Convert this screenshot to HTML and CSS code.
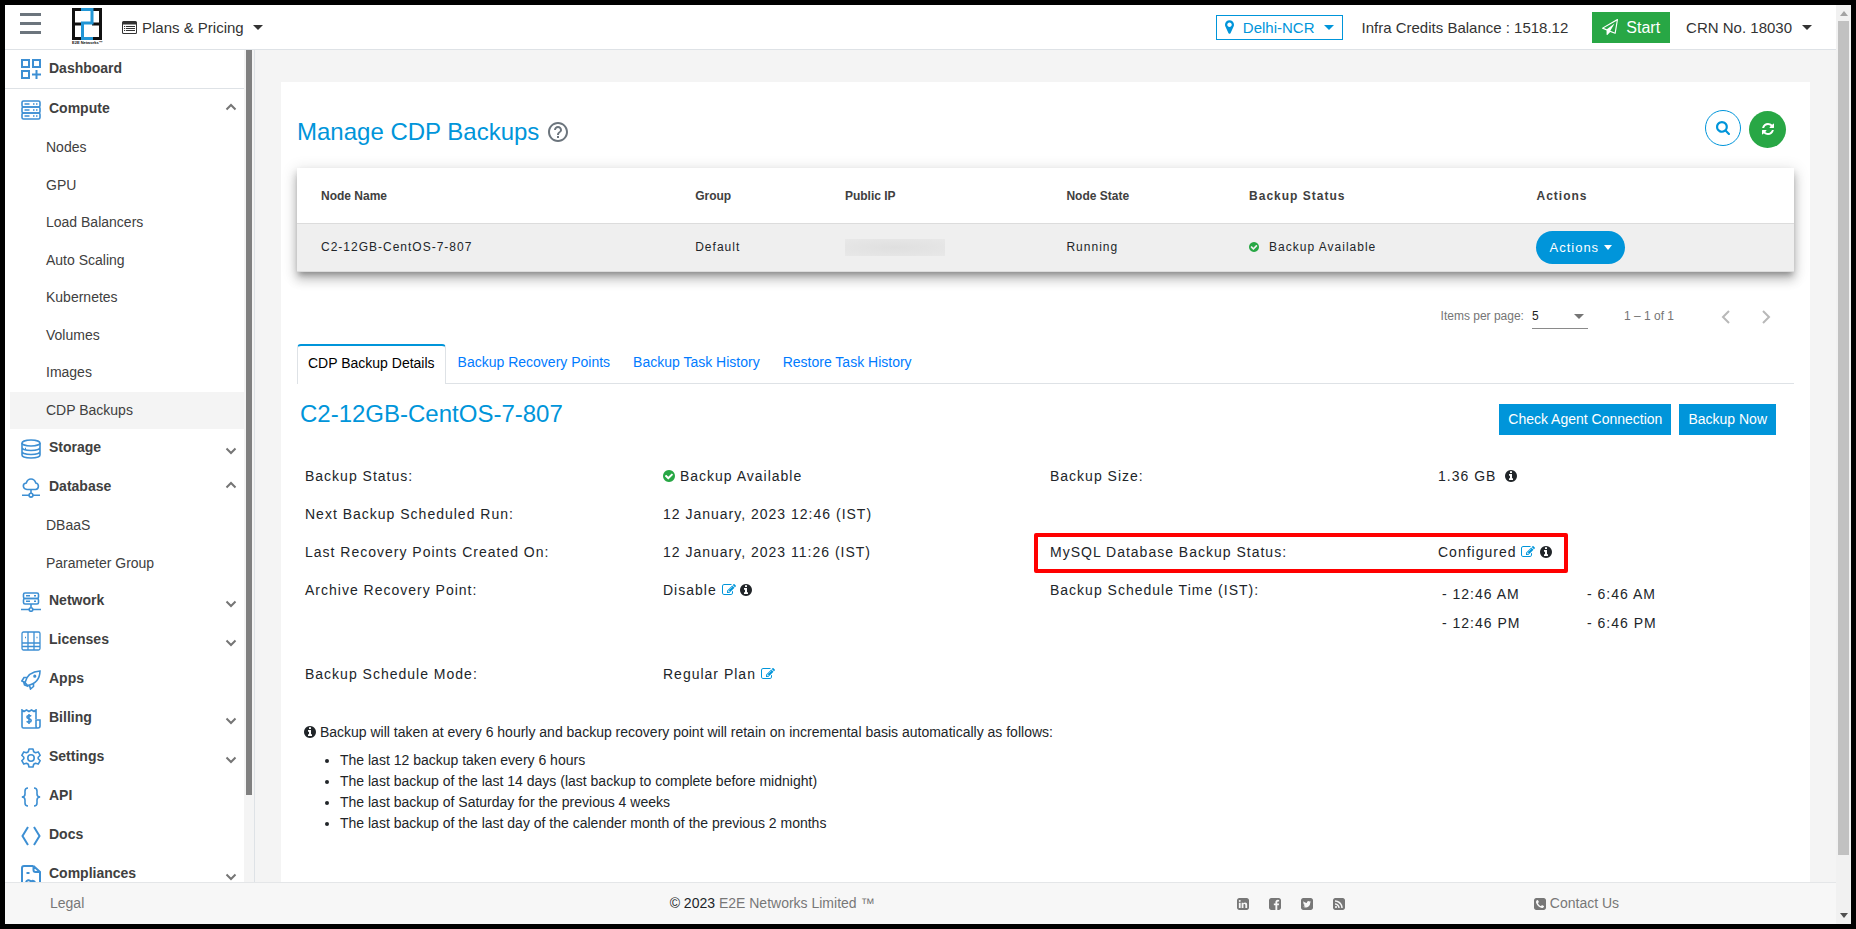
FILE: index.html
```html
<!DOCTYPE html>
<html lang="en">
<head>
<meta charset="utf-8">
<title>Manage CDP Backups</title>
<link rel="stylesheet" href="styles.css">
</head>
<body>
<svg class="sprite" aria-hidden="true">
  <symbol id="info" viewBox="128 128 1536 1536"><path d="M1152 1376v-160q0-14-9-23t-23-9h-96v-512q0-14-9-23t-23-9h-320q-14 0-23 9t-9 23v160q0 14 9 23t23 9h96v320h-96q-14 0-23 9t-9 23v160q0 14 9 23t23 9h448q14 0 23-9t9-23zm-128-896v-160q0-14-9-23t-23-9h-192q-14 0-23 9t-9 23v160q0 14 9 23t23 9h192q14 0 23-9t9-23zm640 416q0 209-103 385.5t-279.5 279.5-385.5 103-385.5-103-279.5-279.5-103-385.5 103-385.5 279.5-279.5 385.5-103 385.5 103 279.5 279.5 103 385.5z"/></symbol>
  <symbol id="check" viewBox="128 128 1536 1536"><path d="M1412 734q0-28-18-46l-91-90q-19-19-45-19t-45 19l-408 407-226-226q-19-19-45-19t-45 19l-91 90q-18 18-18 46 0 27 18 45l362 362q19 19 45 19 27 0 46-19l543-543q18-18 18-45zm252 162q0 209-103 385.5t-279.5 279.5-385.5 103-385.5-103-279.5-279.5-103-385.5 103-385.5 279.5-279.5 385.5-103 385.5 103 279.5 279.5 103 385.5z"/></symbol>
  <symbol id="edit" viewBox="0 128 1792 1536"><path d="M888 1184l116-116-152-152-116 116v56h96v96h56zm440-720q-16-16-33 1l-350 350q-17 17-1 33t33-1l350-350q17-17 1-33zm80 594v190q0 119-84.5 203.5t-203.5 84.5h-832q-119 0-203.5-84.5t-84.5-203.5v-832q0-119 84.5-203.5t203.5-84.5h832q63 0 117 25 15 7 18 23 3 17-9 29l-49 49q-14 14-32 8-23-6-45-6h-832q-66 0-113 47t-47 113v832q0 66 47 113t113 47h832q66 0 113-47t47-113v-126q0-13 9-22l64-64q15-15 35-7t20 29zm-96-738l288 288-672 672h-288v-288zm444 132l-92 92-288-288 92-92q28-28 68-28t68 28l152 152q28 28 28 68t-28 68z"/></symbol>
  <symbol id="down" viewBox="0 0 12 8"><path d="M1.5 1.5 6 6l4.500-4.500" fill="none" stroke="currentColor" stroke-width="2"/></symbol>
  <symbol id="up" viewBox="0 0 12 8"><path d="M1.500 6.500 6 2l4.500 4.500" fill="none" stroke="currentColor" stroke-width="2"/></symbol>
</svg>
<div class="frame">
  <header class="topbar">
    <button class="menu" aria-label="Toggle menu"><span></span><span></span><span></span></button>
    <a class="logo" href="#" aria-label="E2E Networks">
      <svg width="30" height="32" viewBox="0 0 30 32" fill="none" stroke-width="3"><path d="M11 1.500H1.500v29H9M20 1.500h8.500v29H20M1.500 16h8M20 16h9" stroke="#111"/><path d="M9 1.500h11v13.500H10.500v15.500H21" stroke="#2196d6"/></svg>
      <small>E2E Networks™</small>
    </a>
    <button class="drop plans">
      <svg width="15" height="13" viewBox="0 0 15 13"><path fill="currentColor" fill-rule="evenodd" d="M1.500 0h12A1.500 1.500 0 0 1 15 1.500v10a1.500 1.500 0 0 1-1.500 1.500h-12A1.500 1.500 0 0 1 0 11.500v-10A1.500 1.500 0 0 1 1.500 0zM1 3.500V11.500c0 .3.200.5.500.5h12c.3 0 .5-.2.500-.5v-8zM2 5h1.200v1H2zM4 5h9v1H4zM2 7h1.200v1H2zM4 7h9v1H4zM2 9h1.200v1H2zM4 9h9v1H4z"/></svg>
      <span>Plans &amp; Pricing</span><i class="caret"></i>
    </button>
    <div class="topbar-right">
      <button class="drop region">
        <svg width="9" height="14" viewBox="384 128 1024 1536"><path fill="currentColor" d="M1152 640q0-106-75-181t-181-75-181 75-75 181 75 181 181 75 181-75 75-181zm256 0q0 109-33 179l-364 774q-16 33-47.500 52t-67.500 19-67.500-19-46.500-52l-365-774q-33-70-33-179 0-212 150-362t362-150 362 150 150 362z"/></svg>
        <span>Delhi-NCR</span><i class="caret"></i>
      </button>
      <span class="credits">Infra Credits Balance : 1518.12</span>
      <button class="start"><svg width="16" height="16" viewBox="0 0 1792 1792"><path fill="currentColor" d="M1764 11q33 24 27 64l-256 1536q-5 29-32 45-14 8-31 8-11 0-24-5l-527-215-298 327q-18 21-47 21-14 0-23-4-19-7-30-23.500t-11-36.500v-452l-472-193q-37-14-40-55-3-39 32-59l1664-960q35-21 68 2zm-342 1499l221-1323-1434 827 336 137 863-639-478 797z"/></svg>Start</button>
      <button class="drop"><span>CRN No. 18030</span><i class="caret"></i></button>
    </div>
  </header>

  <div class="workspace">
    <nav class="sidebar" aria-label="Main">
      <div class="nav-list">
        <a class="section first" href="#"><svg viewBox="0 0 20 20"><path d="M1 1h7v7H1zM12 1h7v7h-7zM1 12h7v7H1zM15.500 11v9M11 15.500h9" stroke-width="2"/></svg><span>Dashboard</span></a>
        <a class="section" href="#"><svg viewBox="0 0 20 20"><rect x="1" y="1" width="18" height="6" rx="1.500"/><rect x="1" y="7" width="18" height="6" rx="1.500"/><rect x="1" y="13" width="18" height="6" rx="1.500"/><path d="M3.500 4h5M12 4h1.500M15 4h1.500M3.500 10h5M12 10h1.500M15 10h1.500M3.500 16h5M12 16h1.500M15 16h1.500"/></svg><span>Compute</span><svg class="chev up"><use href="#up"/></svg></a>
        <ul class="sub">
          <li><a href="#">Nodes</a></li>
          <li><a href="#">GPU</a></li>
          <li><a href="#">Load Balancers</a></li>
          <li><a href="#">Auto Scaling</a></li>
          <li><a href="#">Kubernetes</a></li>
          <li><a href="#">Volumes</a></li>
          <li><a href="#">Images</a></li>
          <li><a class="active" href="#" aria-current="page">CDP Backups</a></li>
        </ul>
        <a class="section" href="#"><svg viewBox="0 0 20 20"><ellipse cx="10" cy="4" rx="9" ry="3"/><path d="M1 4v12c0 1.700 4 3 9 3s9-1.300 9-3V4M1 8.500c0 1.700 4 3 9 3s9-1.300 9-3M1 12.500c0 1.700 4 3 9 3s9-1.300 9-3M4 9.500h1M4 14.800h1"/></svg><span>Storage</span><svg class="chev"><use href="#down"/></svg></a>
        <a class="section" href="#"><svg viewBox="0 0 20 20"><path d="M6 11.500h8.500a3.300 3.300 0 0 0 .3-6.500C14 2.500 12.200 1 10 1S6 2.500 5.300 5C1 5.500 1.500 11 6 11.500zM10 11.500V15M1 17.200h7M12 17.200h7"/><circle cx="10" cy="17.200" r="1.900"/></svg><span>Database</span><svg class="chev up"><use href="#up"/></svg></a>
        <ul class="sub">
          <li><a href="#">DBaaS</a></li>
          <li><a href="#">Parameter Group</a></li>
        </ul>
        <a class="section" href="#"><svg viewBox="0 0 20 20"><rect x="2.500" y="1" width="15" height="5.500" rx="1.500"/><rect x="2.500" y="6.500" width="15" height="5.500" rx="1.500"/><path d="M5 3.800h4M13 3.800h2M5 9.200h4M13 9.200h2M10 12v3.500M0 17.500h8M12 17.500h8"/><circle cx="10" cy="17.500" r="1.800"/></svg><span>Network</span><svg class="chev"><use href="#down"/></svg></a>
        <a class="section" href="#"><svg viewBox="0 0 20 20" class="thin"><rect x="1" y="1" width="18" height="18" rx="1.500"/><path d="M7 1v18M13 1v18M1 12h18M1 15.500h6M13 15.500h6M7 15.500h6M4 6.500h1M15.500 6.500h1"/></svg><span>Licenses</span><svg class="chev"><use href="#down"/></svg></a>
        <a class="section" href="#"><svg viewBox="0 0 20 20"><path d="M6.500 15.500 4 12.500C5.500 6.500 10 1.500 19 1c-.2 8-4.500 13-12.500 14.500zM5.800 7.500H3L.8 11 4 12.500M12.500 13.500v3L9.500 19l-1-3.500M2.500 11.500l1 3.500 4 1.500"/><circle cx="13.800" cy="6.200" r=".8"/></svg><span>Apps</span></a>
        <a class="section" href="#"><svg viewBox="0 0 20 20"><path d="M15 10V1l-2 1.500L10.500 1 8 2.500 5.500 1 3 2.500 1 1v16.500c0 1 .5 1.500 1.500 1.500H17c1.300 0 2-.7 2-2v-6h-4v6c0 1.200.6 2 1.500 2M8 5v10M10.200 7.300c-1-1-4.300-1-4.300.8 0 2 4.300 1.500 4.300 3.500 0 2-3.500 2-4.500.6"/></svg><span>Billing</span><svg class="chev"><use href="#down"/></svg></a>
        <a class="section" href="#"><svg viewBox="0 0 20 20"><circle cx="10" cy="10" r="3.200"/><path d="M8 1h4l.7 2.700 1.800 1 2.700-.8 2 3.400-2 2v1.400l2 2-2 3.400-2.700-.8-1.800 1L12 19H8l-.7-2.700-1.800-1-2.700.8-2-3.400 2-2V9.300l-2-2 2-3.400 2.700.8 1.800-1z" stroke-linejoin="round"/></svg><span>Settings</span><svg class="chev"><use href="#down"/></svg></a>
        <a class="section" href="#"><svg viewBox="0 0 20 20"><path d="M7 1C4.500 1 4 2 4 4v3c0 2-1 3-3.200 3C3 10 4 11 4 13v3c0 2 .5 3 3 3M13 1c2.500 0 3 1 3 3v3c0 2 1 3 3.200 3-2.200 0-3.200 1-3.200 3v3c0 2-.5 3-3 3"/></svg><span>API</span></a>
        <a class="section" href="#"><svg viewBox="0 0 20 20"><path d="M7 1 1.500 10 7 19M13 1l5.500 9L13 19" stroke-width="2"/></svg><span>Docs</span></a>
        <a class="section" href="#"><svg viewBox="0 0 20 20"><path d="M12.500 1H3C1.700 1 1 1.700 1 3v17M12.500 1l6.500 6v13M12.500 1v4c0 1.500.7 2 2 2H19M5.500 8h3M5 18c0-3 4-4 5-1 1-2 4-1 4 1" stroke-width="2"/></svg><span>Compliances</span><svg class="chev"><use href="#down"/></svg></a>
      </div>
      <div class="side-track" aria-hidden="true"><div class="side-thumb"></div></div>
    </nav>

    <main class="main">
      <div class="card">
        <div class="title-row">
          <h1>Manage CDP Backups</h1>
          <svg class="help" width="24" height="24" viewBox="0 0 24 24"><path fill="currentColor" d="M11 18h2v-2h-2v2zm1-16C6.480 2 2 6.480 2 12s4.480 10 10 10 10-4.480 10-10S17.520 2 12 2zm0 18c-4.410 0-8-3.590-8-8s3.590-8 8-8 8 3.590 8 8-3.590 8-8 8zm0-14c-2.210 0-4 1.790-4 4h2c0-1.100.9-2 2-2s2 .9 2 2c0 2-3 1.750-3 5h2c0-2.250 3-2.500 3-5 0-2.210-1.790-4-4-4z"/></svg>
          <button class="round search" aria-label="Search"><svg width="14" height="14" viewBox="64 128 1664 1664"><path fill="currentColor" d="M1216 832q0-185-131.500-316.500t-316.500-131.500-316.500 131.500-131.500 316.500 131.500 316.500 316.500 131.500 316.500-131.500 131.500-316.500zm512 832q0 52-38 90t-90 38q-54 0-90-38l-343-342q-179 124-399 124-143 0-273.500-55.500t-225-150-150-225-55.500-273.500 55.500-273.500 150-225 225-150 273.500-55.500 273.500 55.500 225 150 150 225 55.500 273.500q0 220-124 399l343 343q37 37 37 90z"/></svg></button>
          <button class="round refresh" aria-label="Refresh"><svg width="12" height="12" viewBox="128 128 1536 1536"><path fill="currentColor" d="M1639 1056q0 5-1 7-64 268-268 434.500t-478 166.500q-146 0-282.500-55t-243.500-157l-129 129q-19 19-45 19t-45-19-19-45v-448q0-26 19-45t45-19h448q26 0 45 19t19 45-19 45l-137 137q71 66 161 102t187 36q134 0 250-65t186-179q11-17 53-117 8-23 30-23h192q13 0 22.500 9.500t9.500 22.500zm25-800v448q0 26-19 45t-45 19h-448q-26 0-45-19t-19-45 19-45l138-138q-148-137-349-137-134 0-250 65t-186 179q-11 17-53 117-8 23-30 23h-199q-13 0-22.500-9.500t-9.500-22.500v-7q65-268 270-434.500t480-166.500q146 0 284 55.500t245 156.500l130-129q19-19 45-19t45 19 19 45z"/></svg></button>
        </div>

        <table class="nodes">
          <colgroup><col class="c-name"><col class="c-group"><col class="c-ip"><col class="c-state"><col class="c-status"><col class="c-act"></colgroup>
          <thead><tr><th>Node Name</th><th>Group</th><th>Public IP</th><th>Node State</th><th class="spaced">Backup Status</th><th class="spaced">Actions</th></tr></thead>
          <tbody><tr>
            <td>C2-12GB-CentOS-7-807</td><td>Default</td><td><div class="masked"></div></td><td>Running</td>
            <td><span class="status"><svg class="ok" width="10" height="10"><use href="#check"/></svg>Backup Available</span></td>
            <td><button class="actions">Actions<i class="caret"></i></button></td>
          </tr></tbody>
        </table>

        <div class="pager">
          <label for="size">Items per page:</label>
          <div class="size"><select id="size"><option>5</option></select><i class="caret"></i></div>
          <span class="range">1 – 1 of 1</span>
          <button aria-label="Previous page"><svg width="9" height="14" viewBox="0 0 9 14"><path d="M8 1 2 7l6 6"/></svg></button>
          <button aria-label="Next page"><svg width="9" height="14" viewBox="0 0 9 14"><path d="m1 1 6 6-6 6"/></svg></button>
        </div>

        <div class="tabs">
          <a class="tab current" href="#">CDP Backup Details</a>
          <a class="tab" href="#">Backup Recovery Points</a>
          <a class="tab" href="#">Backup Task History</a>
          <a class="tab" href="#">Restore Task History</a>
        </div>

        <div class="node-head">
          <h2>C2-12GB-CentOS-7-807</h2>
          <button class="primary">Check Agent Connection</button>
          <button class="primary">Backup Now</button>
        </div>

        <dl class="details">
          <div class="pair"><dt>Backup Status:</dt><dd><svg class="ok" width="12" height="12"><use href="#check"/></svg> Backup Available</dd></div>
          <div class="pair right"><dt>Backup Size:</dt><dd>1.36 GB <svg class="gap" width="12" height="12"><use href="#info"/></svg></dd></div>
          <div class="pair"><dt>Next Backup Scheduled Run:</dt><dd>12 January, 2023 12:46 (IST)</dd></div>
          <div class="pair"><dt>Last Recovery Points Created On:</dt><dd>12 January, 2023 11:26 (IST)</dd></div>
          <div class="pair right marked"><dt>MySQL Database Backup Status:</dt><dd>Configured <svg class="pen" width="14" height="12"><use href="#edit"/></svg> <svg width="12" height="12"><use href="#info"/></svg></dd></div>
          <div class="pair"><dt>Archive Recovery Point:</dt><dd>Disable <svg class="pen" width="14" height="12"><use href="#edit"/></svg> <svg width="12" height="12"><use href="#info"/></svg></dd></div>
          <div class="pair right"><dt>Backup Schedule Time (IST):</dt><dd class="times"><span>- 12:46 AM</span><span>- 6:46 AM</span><span>- 12:46 PM</span><span>- 6:46 PM</span></dd></div>
          <div class="pair"><dt>Backup Schedule Mode:</dt><dd>Regular Plan <svg class="pen" width="14" height="12"><use href="#edit"/></svg></dd></div>
        </dl>

        <p class="note"><svg width="12" height="12"><use href="#info"/></svg> Backup will taken at every 6 hourly and backup recovery point will retain on incremental basis automatically as follows:</p>
        <ul class="policy">
          <li>The last 12 backup taken every 6 hours</li>
          <li>The last backup of the last 14 days (last backup to complete before midnight)</li>
          <li>The last backup of Saturday for the previous 4 weeks</li>
          <li>The last backup of the last day of the calender month of the previous 2 months</li>
        </ul>
      </div>
    </main>
  </div>

  <footer class="footer">
    <a class="legal" href="#">Legal</a>
    <span class="copy">© 2023 <a href="#">E2E Networks Limited ™</a></span>
    <span class="social">
      <a href="#" aria-label="LinkedIn"><svg width="12" height="12" viewBox="128 128 1536 1536"><path fill="currentColor" d="M365 1414h231v-694h-231v694zm246-908q-1-52-36-86t-93-34-94.500 34-36.500 86q0 51 35.500 85.500t92.500 34.500h1q59 0 95-34.500t36-85.500zm585 908h231v-398q0-154-73-233t-193-79q-136 0-209 117h2v-101h-231q3 66 0 694h231v-388q0-38 7-56 15-35 45-59.500t74-24.500q116 0 116 157v371zm468-998v960q0 119-84.500 203.500t-203.500 84.500h-960q-119 0-203.500-84.500t-84.500-203.500v-960q0-119 84.500-203.500t203.500-84.500h960q119 0 203.500 84.500t84.500 203.500z"/></svg></a>
      <a href="#" aria-label="Facebook"><svg width="12" height="12" viewBox="128 128 1536 1536"><path fill="currentColor" d="M1376 128q119 0 203.500 84.500t84.500 203.500v960q0 119-84.500 203.500t-203.500 84.500h-188v-595h199l30-232h-229v-148q0-56 23.500-84t91.500-28l122-1v-207q-63-9-178-9-136 0-217.500 80t-81.500 226v171h-200v232h200v595h-532q-119 0-203.500-84.500t-84.500-203.500v-960q0-119 84.500-203.500t203.500-84.500h960z"/></svg></a>
      <a href="#" aria-label="Twitter"><svg width="12" height="12" viewBox="128 128 1536 1536"><path fill="currentColor" d="M1408 610q-56 25-121 34 68-40 93-117-65 38-134 51-61-66-153-66-87 0-148.500 61.500t-61.500 148.500q0 29 5 48-129-7-242-65t-192-155q-29 50-29 106 0 114 91 175-47-1-100-26v2q0 75 50 133.500t123 72.500q-29 8-51 8-13 0-39-4 21 63 74.500 104t121.500 42q-116 90-261 90-26 0-50-3 148 94 322 94 112 0 210-35.500t168-95 120.500-137 75-162 24.500-168.500q0-18-1-27 63-45 105-109zm256-194v960q0 119-84.500 203.500t-203.500 84.500h-960q-119 0-203.500-84.500t-84.500-203.500v-960q0-119 84.500-203.500t203.500-84.500h960q119 0 203.500 84.500t84.500 203.500z"/></svg></a>
      <a href="#" aria-label="RSS"><svg width="12" height="12" viewBox="128 128 1536 1536"><path fill="currentColor" d="M640 1280q0-53-37.500-90.500t-90.500-37.500-90.500 37.500-37.500 90.500 37.500 90.500 90.500 37.500 90.500-37.500 37.500-90.500zm351 94q-13-232-177-396t-396-177q-14-1-24 9t-10 23v128q0 13 8.500 22t21.500 10q154 11 264 121t121 264q1 13 10 21.500t22 8.500h128q13 0 23-10t9-24zm384 1q-5-154-56-297.500t-139.500-260-205-205-260-139.500-297.500-56q-14-1-23 9-10 10-10 23v128q0 13 9 22t22 10q204 7 378 111.500t278.500 278.500 111.500 378q1 13 10 22t22 9h128q13 0 23-10 11-9 9-23zm289-959v960q0 119-84.500 203.500t-203.500 84.500h-960q-119 0-203.500-84.500t-84.500-203.500v-960q0-119 84.500-203.500t203.500-84.500h960q119 0 203.500 84.500t84.500 203.500z"/></svg></a>
    </span>
    <a class="contact" href="#"><svg width="12" height="12" viewBox="128 128 1536 1536"><path fill="currentColor" d="M1408 1193q0-11-2-16t-18-16.500-40.500-25-47.500-26.500-45.500-25-28.500-15q-5-3-19-13t-25-15-21-5q-15 0-36.500 20.500t-39.500 45-38.500 45-33.500 20.500q-7 0-16.500-3.500t-15.500-6.500-17-9.500-14-8.500q-99-55-170-126.500t-127-170.500q-2-3-8.500-14t-9.500-17-6.500-15.500-3.500-16.500q0-13 20.500-33.500t45-38.500 45-39.500 20.500-36.500q0-10-5-21t-15-25-13-19q-3-6-15-28.500t-25-45.500-26.500-47.500-25-40.500-16.500-18-16-2q-48 0-101 22-46 21-80 94.500t-34 130.500q0 16 2.500 34t5 30.500 9 33 10 29.500 12.500 33 11 30q60 164 216.500 320.500t320.500 216.500q6 2 30 11t33 12.500 29.500 10 33 9 30.500 5 34 2.500q57 0 130.500-34t94.500-80q22-53 22-101zm256-777v960q0 119-84.500 203.500t-203.500 84.500h-960q-119 0-203.500-84.500t-84.500-203.500v-960q0-119 84.500-203.500t203.500-84.500h960q119 0 203.500 84.500t84.500 203.500z"/></svg>Contact Us</a>
  </footer>

  <div class="scroll" aria-hidden="true">
    <svg width="8" height="5" viewBox="0 0 8 5"><path d="M4 0l4 5H0z" fill="#a3a3a3"/></svg>
    <div class="scroll-lane"><div class="scroll-thumb"></div></div>
    <svg width="8" height="5" viewBox="0 0 8 5"><path d="M0 0h8L4 5z" fill="#505050"/></svg>
  </div>
</div>
</body>
</html>
```

FILE: styles.css
```css
* { box-sizing: border-box; }

body {
  margin: 0;
  background: #000;
  color: #212529;
  font: 14px/21px "Liberation Sans", Arial, sans-serif;
}

a { color: inherit; text-decoration: none; }
button { margin: 0; padding: 0; border: 0; background: none; font: inherit; color: inherit; }
ul, dl, dd, h1, h2, p { margin: 0; padding: 0; }
.sprite { display: none; }

.frame {
  display: grid;
  grid-template: 45px minmax(0, 1fr) 42px / minmax(0, 1fr) 15px;
  height: 100vh;
  border: 5px solid #000;
  background: #fff;
}

.caret {
  width: 0;
  height: 0;
  border: 5px solid transparent;
  border-top-color: currentColor;
  border-bottom: 0;
}

/* top bar */
.topbar {
  display: flex;
  align-items: center;
  padding: 0 24px 0 15px;
  border-bottom: 1px solid #dee2e6;
  font-size: 15px;
  color: #333;
}
.menu { display: grid; gap: 6px; width: 21px; margin-bottom: 8px; }
.menu span { height: 3px; background: #6c757d; }
.logo { display: grid; grid-template-columns: 30px; justify-content: center; width: 30px; margin: 0 20px 0 31px; }
.logo svg { display: block; }
.logo small { font-size: 4px; line-height: 6px; font-weight: 700; color: #111; white-space: nowrap; }
.drop { display: flex; align-items: center; gap: 10px; }
.plans { gap: 5px; }
.plans .caret { margin-left: 4px; }
.topbar-right { display: flex; align-items: center; margin-left: auto; }
.region { height: 25px; padding: 0 8px; border: 1px solid #0095da; color: #0095da; gap: 9px; }
.credits { margin: 0 24px 0 19px; }
.start {
  display: flex;
  align-items: center;
  gap: 8px;
  height: 31px;
  margin-right: 16px;
  padding: 0 10px;
  background: #28a745;
  color: #fff;
  font-size: 16px;
}

/* sidebar */
.workspace { display: flex; min-height: 0; }
.sidebar { display: flex; flex: 0 0 250px; overflow: hidden; border-right: 1px solid #dee2e6; background: #f4f4f4; }
.nav-list { flex: 1; height: 100%; overflow: hidden; background: #fff; color: #404040; }
.section { display: flex; align-items: center; height: 39px; padding: 0 7px 0 16px; font-weight: 700; }
.section > svg { width: 20px; height: 20px; margin-right: 8px; fill: none; stroke: #3d8fd3; stroke-width: 1.6; }
.section > .thin { stroke-width: 1.3; }
.section > span { padding-bottom: 2px; }
.section > .chev { width: 12px; height: 8px; margin: 5px 0 0 auto; color: #757575; stroke: none; }
.section > .up { margin: 0 0 5px auto; }
.first { margin-bottom: 1px; border-bottom: 1px solid #dee2e6; }
.sub { list-style: none; padding-left: 5px; }
.sub a { display: block; padding: 8px 0 8px 36px; line-height: 1.54; }
.sub .active { background: #f4f4f4; }
.side-track { width: 10px; padding: 0 2px; }
.side-thumb { height: 89.6%; background: #808080; }

/* content */
.main { display: grid; flex: 1; min-width: 0; padding: 32px 26px 0; background: #f4f4f4; }
.card { min-width: 0; padding: 28px 16px 0; background: #fff; }
h1, h2 { font-size: 24px; font-weight: 400; line-height: 29px; color: #0095da; }
.title-row { display: flex; align-items: center; gap: 7px; height: 38px; padding-right: 8px; margin-bottom: 20px; }
.title-row h1 { padding-top: 4px; }
.help { margin-top: 6px; color: #6c757d; }
.round { display: grid; place-items: center; width: 37px; height: 37px; border-radius: 50%; }
.search { width: 36px; height: 36px; margin: 0 1px 2px auto; border: 1px solid #0095da; color: #0095da; }
.refresh { background: #28a745; color: #fff; }

.nodes {
  width: 100%;
  table-layout: fixed;
  border-collapse: collapse;
  box-shadow: 0 5px 5px -3px rgba(0,0,0,.2), 0 8px 10px 1px rgba(0,0,0,.14), 0 3px 14px 2px rgba(0,0,0,.12), 0 4px 6px rgba(0,0,0,.12);
  font-size: 12px;
  letter-spacing: 1px;
}
.nodes th, .nodes td { padding: 0; text-align: left; border-bottom: 1px solid #dcdcdc; }
.nodes th { height: 55px; padding-top: 2px; color: #404040; letter-spacing: normal; }
.nodes th.spaced { letter-spacing: 1px; }
.nodes td { height: 48px; background: #efefef; }
.nodes th:first-child, .nodes td:first-child { padding-left: 24px; }
.c-name { width: 26.6%; }
.c-group { width: 10%; }
.c-ip { width: 14.8%; }
.c-state { width: 12.2%; }
.c-status { width: 19.2%; }
.c-act { width: 17.2%; }
.masked { width: 100px; height: 17px; background: radial-gradient(#dfdfdf, #e8e8e8); }
.status { display: flex; align-items: center; gap: 10px; }
.ok { fill: #28a745; }
.actions {
  display: flex;
  align-items: center;
  gap: 5px;
  height: 33px;
  padding: 0 13px;
  border-radius: 17px;
  background: #0095da;
  color: #fff;
  font-size: 13px;
  letter-spacing: 1px;
}
.actions .caret { border-width: 5px 4px 0; }

.pager { display: flex; align-items: center; justify-content: flex-end; margin: 33px 23px 0 0; font-size: 12px; color: #757575; }
.size { display: flex; align-items: center; width: 56px; height: 24px; margin: 0 36px 0 8px; border-bottom: 1px solid #8a8a8a; }
.size select { flex: 1; padding: 0; border: 0; background: none; appearance: none; font: inherit; color: #212121; }
.size .caret { margin-right: 4px; }
.range { margin-right: 47px; }
.pager button { display: grid; }
.pager button + button { margin-left: 32px; }
.pager path { fill: none; stroke: #b8b8b8; stroke-width: 2; }

.tabs { display: flex; gap: 1px; margin-top: 15px; border-bottom: 1px solid #dee2e6; color: #007bff; }
.tab { padding: 8px 11px 10px; }
.current {
  margin-bottom: -1px;
  padding: 7px 10px 10px;
  border: 1px solid #dee2e6;
  border-top: 2px solid #0095da;
  border-bottom: 0;
  border-radius: 4px 4px 0 0;
  background: #fff;
  color: #000;
}

.node-head { display: flex; gap: 8px; align-items: flex-start; padding: 15px 18px 0 3px; }
.node-head h2 { margin-right: auto; }
.primary { height: 31px; margin-top: 5px; padding: 0 9px; background: #0095da; color: #fff; }

.details {
  display: grid;
  grid-template-columns: 358fr 387fr 388fr 356fr;
  margin: 22px 0 0 8px;
  letter-spacing: 1px;
  line-height: 22px;
}
.pair { position: relative; display: grid; grid-column: 1 / span 2; grid-template-columns: subgrid; padding: 8px 0; }
.right { grid-column: 3 / span 2; }
.details svg, .note svg { vertical-align: -1px; }
.details svg, .note svg { fill: #212529; }
.gap { margin-left: 4px; }
.details .pen { fill: #0095da; }
.details .ok { fill: #28a745; }
.marked::after {
  content: "";
  position: absolute;
  inset: 0 226px -2px -16px;
  border: 4px solid #f00;
  border-radius: 2px;
}
.times {
  display: grid;
  grid-template-columns: 145px auto;
  justify-content: start;
  padding: 1px 0 9px 4px;
  line-height: 29px;
}
.note { margin: 29px 0 0 7px; }
.policy { margin-top: 7px; padding-left: 43px; }

/* footer */
.footer {
  display: flex;
  align-items: center;
  grid-row: 3;
  border-top: 1px solid #e4e6e8;
  background: #f7f7f7;
  color: #777;
}
.legal { width: 36.3%; padding-left: 45px; }
.copy { width: 31%; color: #212529; }
.copy a { color: #777; }
.social { display: flex; gap: 20px; width: 16.2%; }
.social svg, .contact svg { display: block; }
.contact { display: flex; align-items: center; gap: 4px; }

/* window scroll bar */
.scroll {
  display: flex;
  flex-direction: column;
  align-items: center;
  gap: 5px;
  grid-column: 2;
  grid-row: 1 / 4;
  padding: 6px 0;
  background: #f1f1f1;
}
.scroll-lane { flex: 1; width: 11px; }
.scroll-thumb { height: 94%; background: #c1c1c1; }
```
